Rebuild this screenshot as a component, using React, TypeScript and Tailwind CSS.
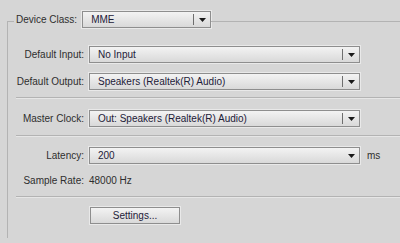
import React from "react";

const Arrow = () => (
  <svg width="7" height="4" viewBox="0 0 7 4" className="block">
    <path d="M0 0 H7 L3.5 4 Z" fill="#1a1a1a" />
  </svg>
);

const Select = ({ value, w, divider = true }: { value: string; w: string; divider?: boolean }) => (
  <div
    className={`${w} h-[17px] flex items-center border border-[#8e8e8e] bg-gradient-to-b from-[#f3f3f3] to-[#d9d9d9] shadow-[0_0_0_1px_#e9e9e9] text-[#1d2038]`}
  >
    <span className="flex-1 pl-[8px] truncate leading-none">{value}</span>
    {divider ? <div className="w-px h-[11px] bg-[#6e6e6e]" /> : null}
    <div className="w-[16px] flex justify-center">
      <Arrow />
    </div>
  </div>
);

const Separator = () => (
  <div className="ml-[8px] h-[2px] border-t border-[#b3b3b3] border-b border-b-[#e6e6e6]" />
);

const Row = ({ label, children }: { label: string; children: React.ReactNode }) => (
  <div className="flex items-center h-[17px]">
    <div className="w-[77px] text-right pr-[1px] text-[#2e2e2e]">{label}</div>
    <div className="ml-[4px] flex items-center">{children}</div>
  </div>
);

export default function App() {
  return (
    <div
      className="w-[400px] h-[243px] bg-[#d6d6d6] overflow-hidden text-[10px]"
      style={{ fontFamily: '"Liberation Sans", Arial, sans-serif' }}
    >
      <div className="pl-[7px] pt-[11px]">
        <div className="flex items-start h-[17px]">
          <div className="w-[7px] h-[7px] mt-[10px] border-t border-l border-[#b3b3b3]" />
          <div className="h-[17px] flex items-center pl-[2px] pr-[5px] text-[#2e2e2e]">Device Class:</div>
          <Select value="MME" w="w-[129px]" />
          <div className="flex-1 mt-[10px] border-t border-[#b3b3b3]" />
        </div>
        <div className="border-l border-[#b3b3b3] h-[210px] flex flex-col">
          <div className="mt-[18px]">
            <Row label="Default Input:">
              <Select value="No Input" w="w-[271px]" />
            </Row>
          </div>
          <div className="mt-[10px]">
            <Row label="Default Output:">
              <Select value="Speakers (Realtek(R) Audio)" w="w-[271px]" />
            </Row>
          </div>
          <div className="mt-[7px]">
            <Separator />
          </div>
          <div className="mt-[11px]">
            <Row label="Master Clock:">
              <Select value="Out: Speakers (Realtek(R) Audio)" w="w-[271px]" />
            </Row>
          </div>
          <div className="mt-[8px]">
            <Separator />
          </div>
          <div className="mt-[10px]">
            <Row label="Latency:">
              <Select value="200" w="w-[271px]" divider={false} />
              <span className="ml-[7px] text-[#2e2e2e]">ms</span>
            </Row>
          </div>
          <div className="mt-[10px] h-[13px] flex items-center">
            <div className="w-[77px] text-right pr-[1px] text-[#2e2e2e]">Sample Rate:</div>
            <div className="ml-[4px] text-[#2e2e2e]">48000 Hz</div>
          </div>
          <div className="mt-[9px]">
            <Separator />
          </div>
          <div className="mt-[9px] flex">
            <button className="ml-[82px] w-[90px] h-[17px] border border-[#8e8e8e] bg-gradient-to-b from-[#f3f3f3] to-[#d9d9d9] shadow-[0_0_0_1px_#e9e9e9] text-[#1d2038] leading-none">
              Settings...
            </button>
          </div>
        </div>
      </div>
    </div>
  );
}
